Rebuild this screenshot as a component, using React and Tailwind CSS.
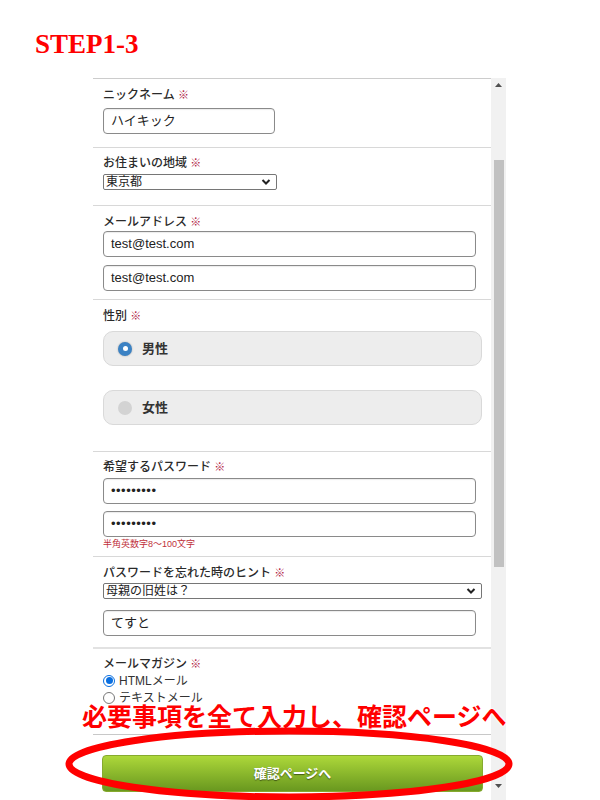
import React from "react";

const font = { fontFamily: '"Liberation Sans", "Noto Sans CJK JP", sans-serif' };

const Label = ({ children }) => (
  <div className="h-[16px] text-[12px] leading-[16px] font-medium text-[#2a2a2a]">
    {children} <span className="text-[#b0203f] text-[11px]">※</span>
  </div>
);

const TextBox = ({ value, wide = true, className = "" }) => (
  <div
    className={`h-[26px] ${wide ? "w-[373px]" : "w-[172px]"} rounded-[4px] border border-[#8a8a8a] bg-white px-[7px] text-[13px] leading-[24px] text-[#222] shadow-[inset_0_1px_1px_rgba(0,0,0,0.08)] ${className}`}
  >
    {value}
  </div>
);

const Chevron = () => (
  <svg width="10" height="8" viewBox="0 0 10 8" className="shrink-0">
    <path d="M1.5 2 L5 5.5 L8.5 2" fill="none" stroke="#222" strokeWidth="2" />
  </svg>
);

const SelectBox = ({ value, className = "" }) => (
  <div
    className={`h-[16px] flex items-center justify-between rounded-[2px] border border-[#767676] bg-white pl-[2px] pr-[5px] text-[12px] leading-[14px] text-[#222] ${className}`}
  >
    <span>{value}</span>
    <Chevron />
  </div>
);

const RadioCard = ({ label, checked, className = "" }) => (
  <div
    className={`h-[35px] w-[379px] flex items-center rounded-[10px] border border-[#d9d9d9] bg-[#ededed] pl-[14px] ${className}`}
  >
    {checked ? (
      <span className="w-[14px] h-[14px] rounded-full bg-[#3b82c4] flex items-center justify-center shadow-[0_0_2px_rgba(0,0,0,0.3)]">
        <span className="w-[5px] h-[5px] rounded-full bg-white" />
      </span>
    ) : (
      <span className="w-[14px] h-[14px] rounded-full bg-[#d3d3d3]" />
    )}
    <span className="ml-[10px] text-[13px] font-bold text-[#333]">{label}</span>
  </div>
);

const SmallRadio = ({ label, checked }) => (
  <div className="h-[17px] flex items-center text-[12px] text-[#333]">
    {checked ? (
      <span className="w-[12px] h-[12px] rounded-full border-[1px] border-[#0a6fe0] flex items-center justify-center">
        <span className="w-[7px] h-[7px] rounded-full bg-[#0a6fe0]" />
      </span>
    ) : (
      <span className="w-[12px] h-[12px] rounded-full border border-[#777] bg-white" />
    )}
    <span className="ml-[4px]">{label}</span>
  </div>
);

const Section = ({ h, pt, children, border = "border-b border-[#d8d8d8]" }) => (
  <div className={`${h} ${pt} pl-[10px] ${border}`}>{children}</div>
);

export default function App() {
  return (
    <div className="relative w-[600px] h-[800px] overflow-hidden bg-white" style={font}>
      <div
        className="pl-[35px] pt-[31px] h-[78px] text-[27px] leading-[27px] font-bold text-[#ff0000]"
        style={{ fontFamily: '"Liberation Serif", serif' }}
      >
        STEP1-3
      </div>

      <div className="ml-[93px] w-[413px] h-[722px] flex">
        <div className="w-[398px] border-t border-[#cccccc]">
          <Section h="h-[69px]" pt="pt-[8px]">
            <Label>ニックネーム</Label>
            <TextBox value="ハイキック" wide={false} className="mt-[5px]" />
          </Section>

          <Section h="h-[58px]" pt="pt-[7px]">
            <Label>お住まいの地域</Label>
            <SelectBox value="東京都" className="mt-[3px] w-[174px]" />
          </Section>

          <Section h="h-[94px]" pt="pt-[8px]">
            <Label>メールアドレス</Label>
            <TextBox value="test@test.com" className="mt-[1px]" />
            <TextBox value="test@test.com" className="mt-[8px]" />
          </Section>

          <Section h="h-[152px]" pt="pt-[8px]">
            <Label>性別</Label>
            <RadioCard label="男性" checked className="mt-[7px]" />
            <RadioCard label="女性" className="mt-[24px]" />
          </Section>

          <Section h="h-[105px]" pt="pt-[7px]">
            <Label>希望するパスワード</Label>
            <TextBox value="•••••••••" className="mt-[3px] text-[6px] tracking-[0.5px]" />
            <TextBox value="•••••••••" className="mt-[7px] text-[6px] tracking-[0.5px]" />
            <div className="mt-[1px] text-[9px] leading-[12px] text-[#c0303a]">半角英数字8～100文字</div>
          </Section>

          <Section h="h-[92px]" pt="pt-[8px]" border="border-b-2 border-[#e2e2e2]">
            <Label>パスワードを忘れた時のヒント</Label>
            <SelectBox value="母親の旧姓は？" className="mt-[2px] w-[379px]" />
            <TextBox value="てすと" className="mt-[11px]" />
          </Section>

          <Section h="h-[86px]" pt="pt-[7px]" border="border-b border-[#c8c8c8]">
            <Label>メールマガジン</Label>
            <SmallRadio label="HTMLメール" checked />
            <SmallRadio label="テキストメール" />
          </Section>

          <div className="pt-[20px] pl-[9px]">
            <div className="h-[37px] w-[381px] flex items-center justify-center rounded-[4px] border border-[#86aa2e] bg-gradient-to-b from-[#add83a] to-[#69981f] text-[13px] font-bold text-white [text-shadow:0_1px_1px_rgba(0,0,0,0.5)]">
              確認ページへ
            </div>
          </div>
        </div>

        <div className="w-[15px] bg-[#f1f1f1] flex flex-col items-center">
          <div className="h-[14px] flex items-center justify-center">
            <svg width="7" height="4" viewBox="0 0 7 4">
              <path d="M0 4 L3.5 0 L7 4 Z" fill="#505050" />
            </svg>
          </div>
          <div className="mt-[68px] w-[10px] h-[407px] bg-[#c1c1c1]" />
          <div className="mt-auto h-[22px] flex items-start justify-center pt-[6px]">
            <svg width="7" height="4" viewBox="0 0 7 4">
              <path d="M0 0 L3.5 4 L7 0 Z" fill="#505050" />
            </svg>
          </div>
        </div>
      </div>

      <div
        className="absolute left-[82px] top-[700px] text-[25px] leading-[30px] font-bold text-[#ff0000] whitespace-nowrap [text-shadow:0_0_2px_#fff,0_0_2px_#fff,0_0_3px_#fff]"
        style={{ fontFamily: '"Noto Sans CJK JP", serif' }}
      >
        必要事項を全て入力し、確認ページへ
      </div>

      <svg className="absolute left-0 top-0 pointer-events-none" width="600" height="800" viewBox="0 0 600 800">
        <ellipse cx="289" cy="764" rx="220" ry="33" fill="none" stroke="#ff0000" strokeWidth="7" />
      </svg>
    </div>
  );
}
